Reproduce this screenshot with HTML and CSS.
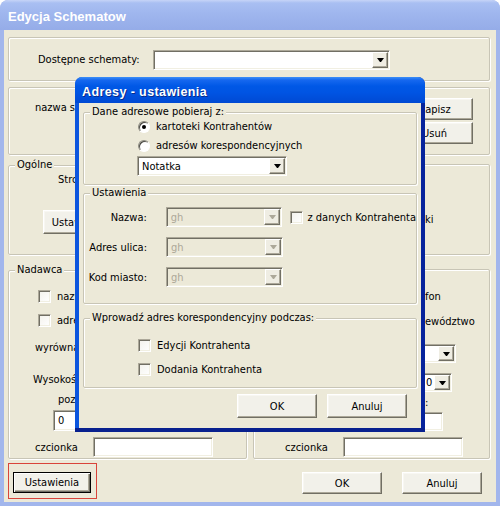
FILE: index.html
```html
<!DOCTYPE html>
<html lang="pl">
<head>
    <meta charset="UTF-8">
    <title>Edycja Schematow</title>
    <link rel="stylesheet" href="styles.css">
</head>
<body>

<div class="window">
    <div class="titlebar titlebar-inactive"><span class="title">Edycja Schematow</span></div>
    <div class="client">

        <fieldset class="group schemes">
            <span class="schemes-label">Dostępne schematy:</span>
            <div class="combo schemes-combo"><span class="combo-value"></span><span class="combo-btn"><i class="arrow"></i></span></div>
        </fieldset>

        <fieldset class="group name">
            <span class="name-label">nazwa s</span>
            <div class="side-buttons">
                <button class="btn side-btn">Zapisz</button>
                <button class="btn side-btn">Usuń</button>
            </div>
        </fieldset>

        <div class="pair">
            <fieldset class="group general">
                <legend>Ogólne</legend>
                <div class="line page-label">Strona</div>
                <button class="btn page-btn">Ustawienia</button>
            </fieldset>
            <fieldset class="group general-right">
                <div class="line tail ki">ki</div>
            </fieldset>
        </div>

        <div class="pair">
            <fieldset class="group sender">
                <legend>Nadawca</legend>
                <div class="line s-name"><span class="check"></span><span>nazwa</span></div>
                <div class="line s-addr"><span class="check"></span><span>adres</span></div>
                <div class="line s-align">wyrównanie</div>
                <div class="line s-height">Wysokość</div>
                <div class="line s-pos">pozycja</div>
                <div class="input s-pos-input">0</div>
                <div class="font-row s-font">
                    <span class="font-label">czcionka</span>
                    <div class="input font-input"></div>
                </div>
            </fieldset>
            <fieldset class="group sender-right">
                <div class="line tail r-phone">fon</div>
                <div class="line tail r-region">ewództwo</div>
                <div class="combo r-combo"><span class="combo-value"></span><span class="combo-btn"><i class="arrow"></i></span></div>
                <div class="combo r-combo-small"><span class="combo-value">0</span><span class="combo-btn"><i class="arrow"></i></span></div>
                <div class="line tail r-colon">:</div>
                <div class="input r-input"></div>
                <div class="font-row r-font">
                    <span class="font-label">czcionka</span>
                    <div class="input font-input"></div>
                </div>
            </fieldset>
        </div>

        <div class="bottom-bar">
            <div class="marked">
                <button class="btn btn-default">Ustawienia</button>
            </div>
            <div class="main-buttons">
                <button class="btn main-btn">OK</button>
                <button class="btn main-btn">Anuluj</button>
            </div>
        </div>
    </div>

    <div class="dialog">
        <div class="titlebar titlebar-active"><span class="title">Adresy - ustawienia</span></div>
        <div class="dialog-body">
            <fieldset class="group d-source">
                <legend>Dane adresowe pobieraj z:</legend>
                <div class="line option opt-first"><span class="radio checked"></span><span>kartoteki Kontrahentów</span></div>
                <div class="line option opt-second"><span class="radio"></span><span>adresów korespondencyjnych</span></div>
                <div class="combo note-combo"><span class="combo-value">Notatka</span><span class="combo-btn"><i class="arrow"></i></span></div>
            </fieldset>

            <fieldset class="group d-settings">
                <legend>Ustawienia</legend>
                <div class="field-row first">
                    <span class="field-label">Nazwa:</span>
                    <div class="combo field-combo disabled"><span class="combo-value">gh</span><span class="combo-btn"><i class="arrow"></i></span></div>
                    <span class="check"></span><span class="check-label">z danych Kontrahenta</span>
                </div>
                <div class="field-row">
                    <span class="field-label">Adres ulica:</span>
                    <div class="combo field-combo disabled"><span class="combo-value">gh</span><span class="combo-btn"><i class="arrow"></i></span></div>
                </div>
                <div class="field-row">
                    <span class="field-label">Kod miasto:</span>
                    <div class="combo field-combo disabled"><span class="combo-value">gh</span><span class="combo-btn"><i class="arrow"></i></span></div>
                </div>
            </fieldset>

            <fieldset class="group d-when">
                <legend>Wprowadź adres korespondencyjny podczas:</legend>
                <div class="line option when-first"><span class="check"></span><span>Edycji Kontrahenta</span></div>
                <div class="line option when-second"><span class="check"></span><span>Dodania Kontrahenta</span></div>
            </fieldset>

            <div class="dialog-buttons">
                <button class="btn dlg-btn">OK</button>
                <button class="btn dlg-btn">Anuluj</button>
            </div>
        </div>
    </div>
</div>

</body>
</html>
```

FILE: styles.css
```css
body {
    margin: 0;
    font-family: "DejaVu Sans Condensed", "Liberation Sans", sans-serif;
    font-size: 11px;
    color: #000;
    background: #fff;
}

/* window frames */
.window {
    position: relative;
    width: 500px;
    height: 506px;
    box-sizing: border-box;
    padding: 0 4px 4px;
    background: #a2b6ec;
    border-radius: 8px 8px 0 0;
    overflow: hidden;
}
.titlebar {
    display: flex;
    align-items: center;
    box-sizing: border-box;
    font-family: "Liberation Sans", Arial, sans-serif;
    font-weight: bold;
    color: #fff;
    white-space: nowrap;
}
.titlebar-inactive {
    height: 30px;
    margin: 0 -4px;
    padding: 3px 0 0 8px;
    font-size: 13px;
    border-radius: 8px 8px 0 0;
    background: linear-gradient(to bottom, #c6d4f7 0, #a9bff2 3px, #9fb6ee 45%, #95ace8 100%);
}
.titlebar-active {
    height: 26px;
    margin: 0 -4px;
    padding: 3px 0 0 7px;
    font-size: 12.5px;
    letter-spacing: 0.4px;
    border-radius: 7px 7px 0 0;
    background: linear-gradient(to bottom, #3d8ff7 0, #1668ef 3px, #0058e6 9px, #0054e3 60%, #0049d3 100%);
    text-shadow: 1px 1px 0 #0a2a8a;
}
.client {
    height: 472px;
    box-sizing: border-box;
    padding: 7px 6px 0 4px;
    background: #ece9d8;
}

/* group boxes */
.group {
    margin: 0;
    padding: 0;
    min-width: 0;
    box-sizing: border-box;
    border: 1px solid #c8c5b6;
    border-radius: 2px;
    box-shadow: inset 1px 1px 0 #fff, 1px 1px 0 #fff;
}
.group legend {
    margin-left: 6px;
    padding: 0 2px;
    line-height: 14px;
    background: #ece9d8;
}
.line {
    display: flex;
    align-items: center;
    height: 15px;
    white-space: nowrap;
}

/* controls */
.btn {
    display: block;
    box-sizing: border-box;
    padding: 0;
    font: inherit;
    color: #000;
    background: #f2f1ea;
    border: 1px solid;
    border-color: #fff #716f64 #716f64 #fff;
    box-shadow: inset -1px -1px 0 #aca899, inset 1px 1px 0 #f8f7f2;
    white-space: nowrap;
}
.combo, .input {
    display: flex;
    align-items: center;
    box-sizing: border-box;
    background: #fff;
    border: 1px solid;
    border-color: #aca899 #fff #fff #aca899;
    box-shadow: inset 1px 1px 0 #716f64, inset -1px -1px 0 #f1efe2;
    white-space: nowrap;
    overflow: hidden;
}
.combo-value {
    flex: 1;
    padding-left: 4px;
}
.combo-btn {
    display: flex;
    align-items: center;
    justify-content: center;
    width: 16px;
    align-self: stretch;
    margin: 1px;
    box-sizing: border-box;
    background: #efede3;
    border: 1px solid;
    border-color: #fff #716f64 #716f64 #fff;
    box-shadow: inset -1px -1px 0 #aca899;
}
.arrow {
    width: 1px;
    height: 0;
    border-left: 3px solid transparent;
    border-right: 3px solid transparent;
    border-top: 4px solid #000;
}
.combo.disabled {
    background: #ece9d8;
    color: #aca899;
}
.combo.disabled .arrow {
    border-top-color: #aca899;
}
.input {
    padding-left: 4px;
}
.check {
    display: inline-block;
    width: 13px;
    height: 13px;
    box-sizing: border-box;
    border: 1px solid;
    border-color: #aca899 #fff #fff #aca899;
    box-shadow: inset 1px 1px 0 #716f64, inset -1px -1px 0 #f1efe2;
    background: linear-gradient(135deg, #f3f2ec, #fff);
    flex: none;
}
.radio {
    position: relative;
    display: inline-block;
    width: 12px;
    height: 12px;
    box-sizing: border-box;
    border: 1px solid;
    border-color: #8d8b80 #fff #fff #8d8b80;
    border-radius: 50%;
    box-shadow: inset 1px 1px 0 #4a4943;
    background: #fff;
    flex: none;
}
.radio.checked::after {
    content: "";
    position: absolute;
    left: 3px;
    top: 3px;
    width: 4px;
    height: 4px;
    border-radius: 50%;
    background: #000;
}

/* Dostępne schematy */
.schemes {
    display: flex;
    align-items: flex-start;
    height: 44px;
    padding: 12px 0 0 29px;
}
.schemes-label {
    width: 115px;
    line-height: 20px;
    white-space: nowrap;
}
.schemes-combo {
    width: 237px;
    height: 20px;
}

/* nazwa schematu */
.name {
    display: flex;
    justify-content: space-between;
    height: 68px;
    margin-top: 6px;
    padding: 10px 16px 0 26px;
}
.name-label {
    margin-top: 3px;
    white-space: nowrap;
}
.side-buttons {
    display: flex;
    flex-direction: column;
    gap: 2px;
}
.side-btn {
    width: 77px;
    height: 22px;
}

/* two columns */
.pair {
    display: flex;
    justify-content: space-between;
    align-items: flex-start;
}
.general {
    width: 239px;
    height: 97px;
    margin-top: 3px;
}
.page-label {
    margin: 0 0 0 49px;
}
.page-btn {
    width: 72px;
    height: 24px;
    margin: 23px 0 0 34px;
}
.general-right {
    width: 237px;
    height: 91px;
    margin-top: 9px;
}
.tail {
    margin-left: 171px;
}
.ki {
    margin-top: 47px;
}

/* Nadawca */
.sender {
    width: 239px;
    height: 196px;
    margin-top: 8px;
}
.sender .check {
    margin-right: 6px;
}
.s-name {
    margin: 12px 0 0 29px;
}
.s-addr {
    margin: 9px 0 0 29px;
}
.s-align {
    margin: 12px 0 0 26px;
}
.s-height {
    margin: 17px 0 0 24px;
}
.s-pos {
    margin: 5px 0 0 49px;
}
.s-pos-input {
    width: 60px;
    height: 21px;
    margin: 3px 0 0 44px;
}
.font-row {
    display: flex;
    align-items: center;
    height: 20px;
    margin-top: 6px;
}
.font-label {
    width: 58px;
}
.font-input {
    width: 120px;
    height: 20px;
}
.s-font {
    padding-left: 26px;
}
.sender-right {
    width: 237px;
    height: 190px;
    margin-top: 14px;
}
.r-phone {
    margin-top: 19px;
}
.r-region {
    margin-top: 10px;
}
.r-combo {
    width: 102px;
    height: 19px;
    margin: 15px 0 0 100px;
}
.r-combo-small {
    width: 32px;
    height: 19px;
    margin: 10px 0 0 166px;
}
.r-combo-small .combo-value {
    padding-left: 5px;
}
.r-colon {
    margin-top: 3px;
}
.r-input {
    width: 63px;
    height: 19px;
    margin: 2px 0 0 126px;
}
.r-font {
    padding-left: 31px;
}

/* bottom buttons */
.bottom-bar {
    display: flex;
    justify-content: space-between;
    align-items: flex-start;
    margin-top: 4px;
}
.marked {
    padding: 8px 5px 5px 4px;
    border: 1px solid #d9443a;
}
.btn-default {
    width: 78px;
    height: 21px;
    border-color: #000;
    box-shadow: inset 1px 1px 0 #fff, inset -1px -1px 0 #716f64, inset -2px -2px 0 #aca899;
}
.main-buttons {
    display: flex;
    gap: 20px;
    margin: 9px 8px 0 0;
}
.main-btn {
    width: 80px;
    height: 22px;
}

/* Adresy - ustawienia */
.dialog {
    position: absolute;
    left: 75px;
    top: 77px;
    width: 350px;
    height: 355px;
    box-sizing: border-box;
    padding: 0 4px 4px;
    border-radius: 7px 7px 0 0;
    background: linear-gradient(to right, #0b55de 0, #0b55de 3px, #06239c 347px, #06239c 100%);
    box-shadow: inset 0 -4px 0 #08208e;
}
.dialog-body {
    height: 325px;
    box-sizing: border-box;
    padding: 2px 4px 0;
    background: #ece9d8;
}
.d-source {
    padding: 0 0 8px;
}
.option .radio, .option .check {
    margin-right: 6px;
}
.opt-first {
    margin-left: 54px;
}
.opt-second {
    margin: 4px 0 0 54px;
}
.note-combo {
    width: 150px;
    height: 20px;
    margin: 3px 0 0 53px;
}
.d-settings {
    margin-top: 1px;
    padding: 0 0 16px;
}
.field-row {
    display: flex;
    align-items: center;
    height: 20px;
    margin-top: 10px;
    white-space: nowrap;
}
.field-row.first {
    margin-top: 7px;
}
.field-label {
    width: 63px;
    margin-right: 19px;
    text-align: right;
}
.field-combo {
    width: 117px;
    height: 20px;
    margin-right: 8px;
}
.check-label {
    margin-left: 4px;
}
.d-when {
    margin-top: 7px;
    padding: 0 0 10px;
}
.when-first {
    margin: 13px 0 0 54px;
}
.when-second {
    margin: 9px 0 0 54px;
}
.dialog-buttons {
    display: flex;
    justify-content: flex-end;
    gap: 10px;
    margin-top: 6px;
    padding-right: 10px;
}
.dlg-btn {
    width: 80px;
    height: 24px;
}
```
